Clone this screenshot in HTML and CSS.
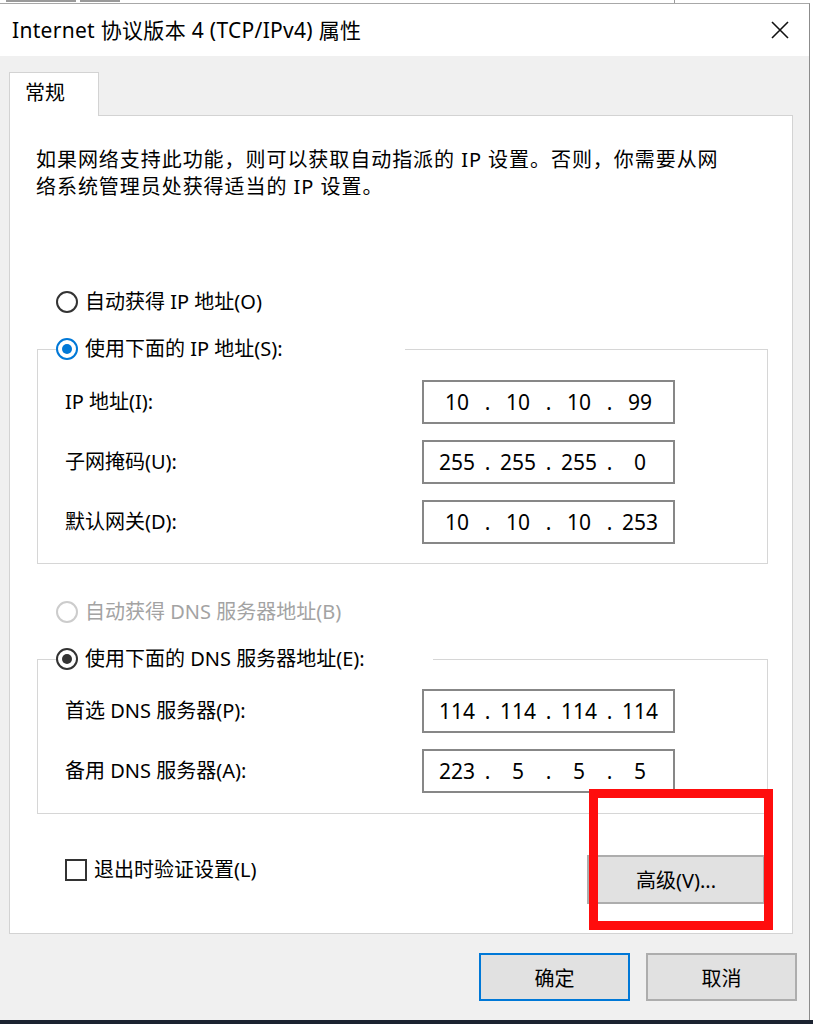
FILE: index.html
```html
<!DOCTYPE html>
<html lang="zh-CN">

<head>
  <meta charset="UTF-8">
  <meta name="viewport" content="width=device-width, initial-scale=1.0">
  <title>Internet 协议版本 4 (TCP/IPv4) 属性</title>
  <link rel="stylesheet" href="styles.css">
</head>

<body>
  <div class="screen">
    <div class="backdrop">
      <span class="mark mark-a"></span>
      <span class="mark mark-b"></span>
      <span class="mark mark-c"></span>
    </div>

    <div class="dialog">
      <header class="titlebar">
        <span class="title">Internet 协议版本 4 (TCP/IPv4) 属性</span>
        <button class="close" aria-label="关闭">
          <svg width="18" height="18" viewBox="0 0 18 18">
            <path d="M1 1 L17 17 M17 1 L1 17" stroke="#111" stroke-width="1.6" fill="none" />
          </svg>
        </button>
      </header>

      <div class="dialog-body">
        <div class="tabs">
          <div class="tab">常规</div>
        </div>

        <div class="panel">
          <p class="intro">如果网络支持此功能，则可以获取自动指派的 IP 设置。否则，你需要从网<br>络系统管理员处获得适当的 IP 设置。</p>

          <div class="radio-row first">
            <span class="radio"></span>
            <span>自动获得 IP 地址(O)</span>
          </div>

          <fieldset class="group">
            <legend class="radio-row legend-ip">
              <span class="radio checked blue"></span>
              <span>使用下面的 IP 地址(S):</span>
            </legend>
            <div class="group-body">
              <div class="field">
                <span class="field-label">IP 地址(I):</span>
                <div class="ip-box">
                  <span class="oct">10</span><span class="dot">.</span><span class="oct">10</span><span class="dot">.</span><span class="oct">10</span><span class="dot">.</span><span class="oct">99</span>
                </div>
              </div>
              <div class="field">
                <span class="field-label">子网掩码(U):</span>
                <div class="ip-box">
                  <span class="oct">255</span><span class="dot">.</span><span class="oct">255</span><span class="dot">.</span><span class="oct">255</span><span class="dot">.</span><span class="oct">0</span>
                </div>
              </div>
              <div class="field">
                <span class="field-label">默认网关(D):</span>
                <div class="ip-box">
                  <span class="oct">10</span><span class="dot">.</span><span class="oct">10</span><span class="dot">.</span><span class="oct">10</span><span class="dot">.</span><span class="oct">253</span>
                </div>
              </div>
            </div>
          </fieldset>

          <div class="radio-row disabled dns-auto">
            <span class="radio"></span>
            <span>自动获得 DNS 服务器地址(B)</span>
          </div>

          <fieldset class="group">
            <legend class="radio-row legend-dns">
              <span class="radio checked dark"></span>
              <span>使用下面的 DNS 服务器地址(E):</span>
            </legend>
            <div class="group-body dns-body">
              <div class="field">
                <span class="field-label">首选 DNS 服务器(P):</span>
                <div class="ip-box">
                  <span class="oct">114</span><span class="dot">.</span><span class="oct">114</span><span class="dot">.</span><span class="oct">114</span><span class="dot">.</span><span class="oct">114</span>
                </div>
              </div>
              <div class="field">
                <span class="field-label">备用 DNS 服务器(A):</span>
                <div class="ip-box">
                  <span class="oct">223</span><span class="dot">.</span><span class="oct">5</span><span class="dot">.</span><span class="oct">5</span><span class="dot">.</span><span class="oct">5</span>
                </div>
              </div>
            </div>
          </fieldset>

          <div class="panel-foot">
            <div class="check-row">
              <span class="checkbox"></span>
              <span>退出时验证设置(L)</span>
            </div>
            <div class="adv-wrap">
              <button class="btn btn-adv">高级(V)...</button>
              <span class="highlight"></span>
            </div>
          </div>
        </div>

        <div class="actions">
          <button class="btn btn-default">确定</button>
          <button class="btn">取消</button>
        </div>
      </div>
    </div>

    <div class="taskbar"></div>
  </div>
</body>

</html>
```

FILE: styles.css
```css
body {
  margin: 0;
  background-color: #fff;
  font-family: "Noto Sans", "Noto Sans CJK SC", sans-serif;
  color: #000;
}

.screen {
  width: 813px;
  height: 1024px;
  overflow: hidden;
  display: flex;
  flex-direction: column;
}

/* remnants of the window behind the dialog */
.backdrop {
  height: 3px;
  display: flex;
  gap: 4px;
  padding-left: 6px;
}

.mark {
  height: 2px;
  background-color: #9a9a9a;
}

.mark-a {
  width: 70px;
}

.mark-b {
  width: 40px;
}

.mark-c {
  width: 1px;
  height: 3px;
  margin-left: 550px;
}

.dialog {
  width: 810px;
  flex: 1;
  display: flex;
  flex-direction: column;
  border-top: 1px solid #a8a8a8;
  border-right: 1px solid #8c8c8c;
  box-sizing: border-box;
}

.titlebar {
  height: 52px;
  display: flex;
  align-items: center;
  justify-content: space-between;
  padding: 0 20px 0 12px;
  background-color: #fff;
}

.title {
  font-size: 21px;
  line-height: 28px;
  letter-spacing: 0.3px;
}

.close {
  border: none;
  background: none;
  padding: 0;
  width: 18px;
  height: 18px;
  display: flex;
}

.dialog-body {
  flex: 1;
  background-color: #f0f0f0;
  padding: 16px 12px 0 9px;
}

.tabs {
  display: flex;
}

.tab {
  width: 90px;
  height: 44px;
  box-sizing: border-box;
  border: 1px solid #d3d3d3;
  border-bottom: none;
  background-color: #fff;
  padding: 8px 0 0 15px;
  font-size: 20px;
  line-height: 24px;
  margin-bottom: -1px;
  position: relative;
}

.panel {
  width: 784px;
  box-sizing: border-box;
  border: 1px solid #d3d3d3;
  background-color: #fff;
  padding: 30px 26px 29px 26px;
  font-size: 20px;
}

.intro {
  margin: 0;
  line-height: 27px;
  letter-spacing: 0.95px;
}

.radio-row {
  display: flex;
  align-items: center;
  gap: 7px;
  height: 22px;
  line-height: 22px;
  margin-left: 20px;
}

.radio-row.first {
  margin-top: 91px;
}

.radio {
  width: 22px;
  height: 22px;
  box-sizing: border-box;
  border: 2px solid #333;
  border-radius: 50%;
  display: flex;
  align-items: center;
  justify-content: center;
  background-color: #fff;
}

.radio.checked::after {
  content: "";
  width: 10px;
  height: 10px;
  border-radius: 50%;
}

.radio.blue {
  border-color: #0078d7;
}

.radio.blue::after {
  background-color: #0078d7;
}

.radio.dark::after {
  background-color: #333;
}

.disabled {
  color: #a3a3a3;
}

.disabled .radio {
  border-color: #cccccc;
}

.dns-auto {
  margin-top: 37px;
}

.group {
  margin: 25px -2px 0 1px;
  padding: 0;
  border: 1px solid #d6d6d6;
  min-width: 0;
}

.group legend {
  padding: 0;
  margin-left: 18px;
  box-sizing: border-box;
}

.legend-ip {
  width: 349px;
}

.legend-dns {
  width: 377px;
}

.group-body {
  display: flex;
  flex-direction: column;
  gap: 16px;
  padding: 20px 0 19px 27px;
}

.group-body.dns-body {
  padding: 19px 0 20px 27px;
}

.field {
  display: flex;
  align-items: center;
  height: 44px;
}

.field-label {
  width: 357px;
  line-height: 24px;
}

.ip-box {
  width: 253px;
  height: 44px;
  box-sizing: border-box;
  border: 2px solid #878787;
  display: flex;
  align-items: center;
  padding-left: 11px;
  font-size: 21px;
  line-height: 24px;
}

.oct {
  width: 44px;
  text-align: center;
}

.dot {
  width: 17px;
  text-align: center;
}

.panel-foot {
  margin-top: 41px;
  display: flex;
  justify-content: space-between;
  align-items: flex-start;
  padding-right: 1px;
}

.check-row {
  display: flex;
  align-items: center;
  gap: 7px;
  margin: 4px 0 0 29px;
  line-height: 22px;
}

.checkbox {
  width: 22px;
  height: 22px;
  box-sizing: border-box;
  border: 2px solid #333;
  background-color: #fff;
}

.btn {
  font-family: inherit;
  font-size: 20px;
  color: #000;
  background-color: #e1e1e1;
  border: 2px solid #adadad;
  padding: 0;
}

.adv-wrap {
  position: relative;
}

.btn-adv {
  width: 178px;
  height: 49px;
  display: block;
}

.highlight {
  position: absolute;
  left: 2px;
  top: -66px;
  width: 184px;
  height: 141px;
  box-sizing: border-box;
  border: 9px solid #ff0d0d;
}

.actions {
  display: flex;
  justify-content: flex-end;
  gap: 16px;
  margin-top: 19px;
}

.actions .btn {
  width: 151px;
  height: 48px;
}

.btn-default {
  border-color: #0078d7;
}

.taskbar {
  height: 4px;
  background-color: #1b2230;
}
```
